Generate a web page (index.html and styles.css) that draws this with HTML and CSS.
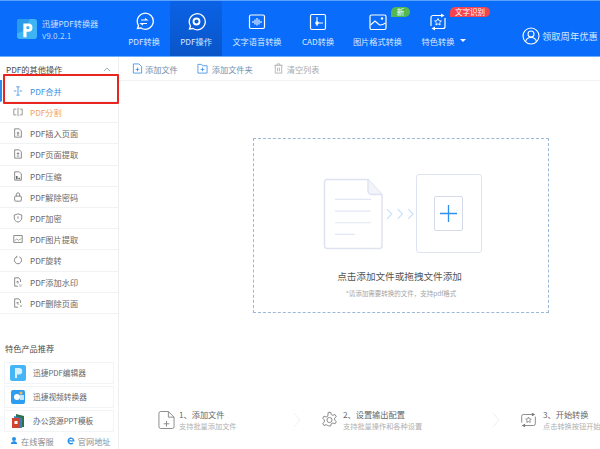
FILE: index.html
```html
<!DOCTYPE html>
<html lang="zh">
<head>
<meta charset="utf-8">
<title>迅捷PDF转换器</title>
<link rel="stylesheet" href="styles.css">
</head>
<body>
<div class="app">
  <header class="topbar">
    <div class="brand">
      <svg class="logo" viewBox="0 0 22 22"><rect width="22" height="22" rx="3" fill="#3fb4f4"/><path d="M0 16 Q10 14 14 0 L3 0 Q0 0 0 3Z" fill="#2a9be8"/><path d="M7 20V5h5.500a4.500 4.500 0 0 1 0 9H10.500v6z" fill="#fff"/><circle cx="12" cy="9.500" r="1.800" fill="#3fb4f4"/></svg>
      <div class="brand-text"><div>迅捷PDF转换器</div><div class="ver">v9.0.2.1</div></div>
    </div>
    <nav class="tabs">
      <div class="tab t1"><svg viewBox="0 0 20 20" class="ti"><path d="M3.500 16.500 L4.500 13.500 A8 8 0 1 1 7 16 Z" fill="none" stroke="#fff" stroke-width="1.300"/><path d="M7 8h6l-2-1.500M13 11.500H7l2 1.500" fill="none" stroke="#fff" stroke-width="1.100"/></svg><span>PDF转换</span></div>
      <div class="tab t2 on"><svg viewBox="0 0 20 20" class="ti"><path d="M3.500 17 L4.500 14 A8 8 0 1 1 7 16.500 Z" fill="none" stroke="#fff" stroke-width="1.300"/><circle cx="10.500" cy="9.500" r="3" fill="none" stroke="#fff" stroke-width="1.800"/></svg><span>PDF操作</span></div>
      <div class="tab t3"><svg viewBox="0 0 20 20" class="ti"><rect x="2.500" y="3" width="15" height="13.500" rx="1.500" fill="none" stroke="#fff" stroke-width="1.200"/><path d="M6 9v2M8 7.500v5M10 6v7.500M12 7.500v5M14 9v2" stroke="#fff" stroke-width="1.100"/></svg><span>文字语音转换</span></div>
      <div class="tab t4"><svg viewBox="0 0 20 20" class="ti"><rect x="2.500" y="2.500" width="15" height="15" rx="1.500" fill="none" stroke="#fff" stroke-width="1.200"/><path d="M9 5v9M9 11h6" stroke="#fff" stroke-width="1.100"/><circle cx="9" cy="11" r="1.800" fill="#fff"/></svg><span>CAD转换</span></div>
      <div class="tab t5"><svg viewBox="0 0 20 20" class="ti"><rect x="2" y="3" width="16" height="14.500" rx="1.500" fill="none" stroke="#fff" stroke-width="1.200"/><path d="M2.500 13 L7 9 l4 3.500 q2 1.500 6.500-1.500" fill="none" stroke="#fff" stroke-width="1.100"/><circle cx="14" cy="6.500" r="1.200" fill="#fff"/></svg><span>图片格式转换</span><em class="badge green">新</em></div>
      <div class="tab t6"><svg viewBox="0 0 20 20" class="ti"><path d="M15 3.500H5a2 2 0 0 0-2 2V14M5 16.500h10a2 2 0 0 0 2-2V6" fill="none" stroke="#fff" stroke-width="1.200"/><path d="M13 1.500 16.500 3.500 13 5.500zM7 14.500 3.500 16.500 7 18.500z" fill="#fff"/><path d="M10 6.500l1 2.200 2.400.3-1.700 1.600.4 2.400-2.100-1.200-2.100 1.200.4-2.400L6.600 9l2.400-.3z" fill="none" stroke="#fff" stroke-width=".9"/></svg><span>特色转换</span><i class="caret"></i><em class="badge red">文字识别</em></div>
    </nav>
    <div class="user"><svg viewBox="0 0 18 18" class="ui"><circle cx="9" cy="9" r="8" fill="none" stroke="#fff" stroke-width="1.100"/><circle cx="9" cy="7" r="3" fill="none" stroke="#fff" stroke-width="1.100"/><path d="M3.500 15c.5-3 3-4.500 5.500-4.500s5 1.500 5.500 4.500" fill="none" stroke="#fff" stroke-width="1.100"/></svg><span>领取周年优惠</span></div>
  </header>
  <div class="body">
    <aside class="side">
      <div class="side-head"><span>PDF的其他操作</span><svg class="chev" viewBox="0 0 8 5"><path d="M1 4l3-3 3 3" fill="none" stroke="#7aa" stroke-width=".8"/></svg></div>
      <ul class="menu">
        <li class="row sel"><svg class="mi" viewBox="0 0 12 12"><path d="M6 1v10M4 1h4M4 11h4M1 6h3M8 6h3" stroke="#3c8fe8" stroke-width="1" fill="none"/></svg>PDF合并</li>
        <li class="row org"><svg class="mi" viewBox="0 0 12 12"><path d="M6 1v10M4 2.500H1v7h3M8 2.500h3v7H8" stroke="#777" stroke-width=".9" fill="none"/></svg>PDF分割</li>
        <li class="row"><svg class="mi" viewBox="0 0 12 12"><path d="M2 1h5.500L10 3.500V11H2zM4.500 6h3M6 4.500v3M4.500 8.500h3" stroke="#666" stroke-width=".9" fill="none"/></svg>PDF插入页面</li>
        <li class="row"><svg class="mi" viewBox="0 0 12 12"><path d="M2 1h5.500L10 3.500V11H2zM4.500 5.500h3M6 4v3M4.500 8.500h3" stroke="#666" stroke-width=".9" fill="none"/></svg>PDF页面提取</li>
        <li class="row"><svg class="mi" viewBox="0 0 12 12"><path d="M2 1h5.500L10 3.500V11H2z" stroke="#666" stroke-width=".9" fill="none"/><path d="M3.500 6h2v4h-2zM6.500 8h2v2h-2z" fill="#666"/></svg>PDF压缩</li>
        <li class="row"><svg class="mi" viewBox="0 0 12 12"><rect x="2" y="5" width="8" height="6" rx="1" stroke="#666" stroke-width=".9" fill="none"/><path d="M4 5V3a2 2 0 0 1 4 0v2" stroke="#666" stroke-width=".9" fill="none"/></svg>PDF解除密码</li>
        <li class="row"><svg class="mi" viewBox="0 0 12 12"><path d="M6 1l4.500 1.500V6c0 2.500-2 4-4.500 5-2.500-1-4.500-2.500-4.500-5V2.500zM6 4v3" stroke="#666" stroke-width=".9" fill="none"/></svg>PDF加密</li>
        <li class="row"><svg class="mi" viewBox="0 0 12 12"><rect x="1" y="2" width="10" height="8" stroke="#666" stroke-width=".9" fill="none"/><path d="M2 8l2.500-2 2 1.500L10 5.500" stroke="#666" stroke-width=".7" fill="none"/></svg>PDF图片提取</li>
        <li class="row"><svg class="mi" viewBox="0 0 12 12"><path d="M4.500 2.200a4.300 4.300 0 1 0 3 0M4.500 1v2" stroke="#666" stroke-width=".9" fill="none"/></svg>PDF旋转</li>
        <li class="row"><svg class="mi" viewBox="0 0 12 12"><path d="M9 6V3.500L7 1H2v10h4M4 6l2-1v3" stroke="#666" stroke-width=".9" fill="none"/><path d="M7.500 9.500h3M7.500 11h3" stroke="#999" stroke-width=".7"/></svg>PDF添加水印</li>
        <li class="row"><svg class="mi" viewBox="0 0 12 12"><path d="M9 6V3.500L7 1H2v10h4M4 6l2-1v3" stroke="#666" stroke-width=".9" fill="none"/><path d="M8 8l3 3M11 8l-3 3" stroke="#999" stroke-width=".7"/></svg>PDF删除页面</li>
      </ul>
      <div class="promo-title">特色产品推荐</div>
      <div class="promo">
        <div class="card"><svg class="pi" viewBox="0 0 16 16"><rect width="16" height="16" rx="2" fill="#45b5f5"/><path d="M5 13V3h4a3 3 0 0 1 0 6.500H7V13z" fill="#d6f0ff"/></svg>迅捷PDF编辑器</div>
        <div class="card"><svg class="pi" viewBox="0 0 16 16"><rect x="1" y="1" width="14" height="14" rx="2" fill="#2e9cf0"/><circle cx="7" cy="8" r="3" fill="#fff"/><path d="M10 6h4v5h-4z" fill="#bfe4ff"/><circle cx="11" cy="4" r="1.500" fill="#ffb74d"/></svg>迅捷视频转换器</div>
        <div class="card"><svg class="pi" viewBox="0 0 16 16"><path d="M6 1l8 2v11H6z" fill="#2f6f4f"/><path d="M4 3l8 2v10H4z" fill="#3a7fb5"/><path d="M2 5h8v10H2z" fill="#d0442f"/><rect x="4.500" y="8" width="3" height="3" fill="#fff"/></svg>办公资源PPT模板</div>
      </div>
      <div class="links">
        <span><svg class="li" viewBox="0 0 10 10"><circle cx="5" cy="3" r="2.500" fill="#2490e8"/><path d="M1 9.500c.5-3 2.500-3.500 4-3.500s3.500.5 4 3.500z" fill="#2490e8"/></svg>在线客服</span>
        <span><svg class="li" viewBox="0 0 10 10"><path d="M2 5.500h6.500a3.500 3.500 0 1 0-1 2.500" fill="none" stroke="#2490e8" stroke-width="1.700"/></svg>官网地址</span>
      </div>
    </aside>
    <main class="main">
      <div class="toolbar">
        <span class="tool"><svg class="tk" viewBox="0 0 12 12"><path d="M1.500 1h6L10.500 4v7h-9zM4 7h4M6 5v4" fill="none" stroke="#3c8fe8" stroke-width=".9"/></svg>添加文件</span>
        <span class="tool folder"><svg class="tk" viewBox="0 0 12 12"><path d="M1 3V1.500h4L6 3h5v8H1zM4 7h4M6 5v4" fill="none" stroke="#3c8fe8" stroke-width=".9"/></svg>添加文件夹</span>
        <span class="tool off"><svg class="tk" viewBox="0 0 12 12"><path d="M1.500 2.500h9M4.500 2.500V1h3v1.500M2.500 2.500V11h7V2.500M5 5v4M7 5v4" fill="none" stroke="#aaa" stroke-width=".9"/></svg>清空列表</span>
      </div>
      <div class="stage">
        <div class="drop">
          <div class="art">
            <svg class="doc" viewBox="0 0 60 74" preserveAspectRatio="none"><path d="M4 1.500H45L59 17V70a2.500 2.500 0 0 1-2.500 2.500H4A2.500 2.500 0 0 1 1.500 70V4A2.500 2.500 0 0 1 4 1.500z" fill="#fff" stroke="#dfe3f1" stroke-width="1.500"/><path d="M45 1.500V13a4 4 0 0 0 4 4H59" fill="#f2f4fa" stroke="#dfe3f1" stroke-width="1.500"/><path d="M12 22H48M12 34H48M12 46H48M12 58H32" stroke="#e3e6f3" stroke-width="1.200"/></svg>
            <svg class="arrows" viewBox="0 0 30 12"><path d="M1 1l5 5-5 5M12 1l5 5-5 5M23 1l5 5-5 5" fill="none" stroke="#c5e2fb" stroke-width="1.200"/></svg>
            <div class="box"><div class="inner"><svg viewBox="0 0 17 17" class="plus"><path d="M8.500 0v17M0 8.500h17" stroke="#2d8fee" stroke-width="1.300"/></svg></div></div>
          </div>
          <div class="drop-title">点击添加文件或拖拽文件添加</div>
          <div class="drop-note">*请添加需要转换的文件，支持pdf格式</div>
        </div>
      </div>
      <div class="steps">
        <div class="step s1"><svg class="si" viewBox="0 0 18 20"><path d="M3 1h8l6 6v10a2 2 0 0 1-2 2H3a2 2 0 0 1-2-2V3a2 2 0 0 1 2-2zM11 1v6h6M6 14h6M9 11v6" fill="none" stroke="#888" stroke-width="1"/></svg><div><div class="st">1、添加文件</div><div class="sd">支持批量添加文件</div></div></div>
        <svg class="sep" viewBox="0 0 8 16"><path d="M1 1l6 7-6 7" fill="none" stroke="#f1f1f1"/></svg>
        <div class="step s2"><svg class="si" viewBox="0 0 20 20"><path d="M8.500 1h3l.5 2.500 2 1 2.500-1 1.500 2.600-2 1.700v2.400l2 1.700-1.500 2.600-2.500-1-2 1-.5 2.500h-3L8 16.500l-2-1-2.500 1L2 13.900l2-1.700V9.800l-2-1.700 1.500-2.600 2.500 1 2-1z" fill="none" stroke="#777" stroke-width="1"/><circle cx="10" cy="10" r="3" fill="none" stroke="#777" stroke-width="1"/></svg><div><div class="st">2、设置输出配置</div><div class="sd">支持批量操作和各种设置</div></div></div>
        <svg class="sep" viewBox="0 0 8 16"><path d="M1 1l6 7-6 7" fill="none" stroke="#f1f1f1"/></svg>
        <div class="step s3"><svg class="si" viewBox="0 0 20 20"><path d="M15 3.500H4a2 2 0 0 0-2 2V13M5 16.500h11a2 2 0 0 0 2-2V6" fill="none" stroke="#777" stroke-width="1"/><path d="M14 1.500l4 2-4 2zM6 14.500l-4 2 4 2z" fill="#777"/><path d="M10 6.500l1 2.200 2.300.3-1.700 1.600.4 2.300-2-1.100-2 1.100.4-2.300L6.700 9l2.300-.3z" fill="none" stroke="#777" stroke-width=".9"/></svg><div><div class="st">3、开始转换</div><div class="sd">点击转换按钮开始转换</div></div></div>
      </div>
    </main>
  </div>
  <div class="redbox"></div>
</div>
</body>
</html>
```

FILE: styles.css
```css
* { box-sizing: border-box; }
html, body { margin: 0; padding: 0; width: 600px; height: 449px; overflow: hidden; background: #fff; }
body { font-family: "Noto Sans CJK SC", "Noto Sans", sans-serif; font-size: 8.200px; color: #555; }
ul { list-style: none; margin: 0; padding: 0; }
svg { display: block; flex: none; }
em, i { font-style: normal; }
.app { position: relative; width: 600px; height: 449px; overflow: hidden; }

.topbar { height: 57px; display: flex; background: #0a6cfb; border-top: 1px solid #5aa2fb; border-bottom: 1px solid #6cb0fa; color: #dbe9ff; }
.brand { width: 123px; flex: none; display: flex; align-items: center; gap: 5px; padding: 1px 0 0 17px; }
.logo { width: 20px; height: 20px; }
.brand-text { line-height: 12px; color: #cfe2fd; }
.ver { color: #bcd6fb; }
.tabs { display: flex; flex: none; }
.tab { position: relative; display: flex; flex-direction: column; align-items: center; padding-top: 11px; line-height: 12px; white-space: nowrap; }
.tab .ti { width: 20px; height: 20px; margin-bottom: 3px; }
.tab.on { background: linear-gradient(#0a62e6, #0a55c8); }
.t1 { width: 42px; }
.t2 { width: 52px; margin-left: 5px; }
.t3 { width: 70px; }
.t4 { width: 46px; margin-left: 3px; }
.t5 { width: 73px; }
.t6 { width: 44px; margin-left: 2px; }
.caret { position: absolute; left: 44px; top: 38px; border-left: 3px solid transparent; border-right: 3px solid transparent; border-top: 3px solid #fff; }
.badge { position: absolute; top: 6px; height: 10px; line-height: 10px; font-size: 7.500px; color: #fff; text-align: center; border-radius: 6px 6px 6px 0; }
.green { left: 50px; width: 19px; background: #55b84f; }
.red { left: 34px; width: 40px; background: #f5444e; }
.user { display: flex; align-items: center; gap: 2px; padding: 14px 0 0 62px; font-size: 9.300px; white-space: nowrap; color: #d6e6ff; }
.ui { width: 18px; height: 18px; }

.body { display: flex; height: 392px; }
.side { width: 119px; flex: none; border-right: 1px solid #eceef2; display: flex; flex-direction: column; }
.side > *, .main > * { flex: none; }
.side-head { height: 23px; padding: 0 4px 0 6px; display: flex; align-items: center; justify-content: space-between; color: #4a4a4a; }
.chev { width: 8px; height: 5px; margin: 1px 3px 0 0; }
.row { height: 21.200px; display: flex; align-items: center; gap: 7px; padding-left: 13px; border-bottom: 1px solid #f1f2f4; color: #686868; }
.mi { width: 10px; height: 12px; }
.row.sel { color: #3c8fe8; border-left: 2px solid #2e8def; padding-left: 11px; height: 22px; }
.row.org { color: #f0a460; }
.promo-title { margin: 27px 0 0 5px; line-height: 14px; color: #4a4a4a; }
.promo { display: flex; flex-direction: column; gap: 2px; margin: 7px 4px 0 4px; }
.card { height: 22px; display: flex; align-items: center; gap: 7px; padding-left: 5px; border: 1px solid #f3f4f6; font-size: 7.700px; color: #666; white-space: nowrap; }
.pi { width: 16px; height: 16px; }
.links { display: flex; gap: 13px; padding: 3px 0 0 10px; color: #8c8c8c; line-height: 12px; white-space: nowrap; }
.links span { display: flex; align-items: center; gap: 3px; }
.li { width: 8px; height: 9px; }

.main { flex: 1; min-width: 0; display: flex; flex-direction: column; }
.toolbar { height: 24px; display: flex; align-items: center; padding: 0 0 0 13px; gap: 19px; border-bottom: 1px solid #f2f2f4; color: #6f8fb0; }
.tool { display: flex; align-items: center; gap: 2px; white-space: nowrap; }
.tool.folder { gap: 4px; }
.tool.off { color: #aaa; gap: 3px; margin-left: 1px; }
.tk { width: 11px; height: 11px; }
.stage { height: 258px; padding: 57px 0 0 134px; }
.drop { width: 296px; height: 175px; border: 1px dashed #9cb8d6; display: flex; flex-direction: column; align-items: center; padding-top: 35px; }
.art { display: flex; align-items: center; padding-left: 2px; }
.doc { width: 60px; height: 72px; }
.arrows { width: 29px; height: 12px; margin: 0 1px 0 3px; }
.box { width: 66px; height: 79px; border: 1.500px solid #dfe3f1; border-radius: 3px; display: flex; align-items: center; justify-content: center; }
.inner { width: 29px; height: 35px; border: 1.500px solid #d5daea; border-radius: 2px; display: flex; align-items: center; justify-content: center; }
.plus { width: 17px; height: 17px; }
.drop-title { margin-top: 16px; padding-right: 3px; font-size: 9.600px; line-height: 14px; color: #555; }
.drop-note { margin-top: 5px; font-size: 6.500px; line-height: 10px; color: #a5a5a5; }
.steps { display: flex; align-items: center; padding: 69px 0 0 39px; white-space: nowrap; }
.step { display: flex; align-items: center; gap: 4px; flex: none; }
.si { width: 17px; height: 20px; }
.st { line-height: 13px; color: #666; }
.sd { font-size: 7.200px; line-height: 11px; color: #b0b0b0; }
.s1 { width: 135px; }
.s2 { width: 171px; margin-left: 20px; gap: 5px; }
.s3 { margin-left: 20px; gap: 6px; }
.sep { width: 8px; height: 16px; }
.redbox { position: absolute; left: 3px; top: 74px; width: 116px; height: 30px; border: 2px solid #e8251f; border-radius: 1px; }
```
